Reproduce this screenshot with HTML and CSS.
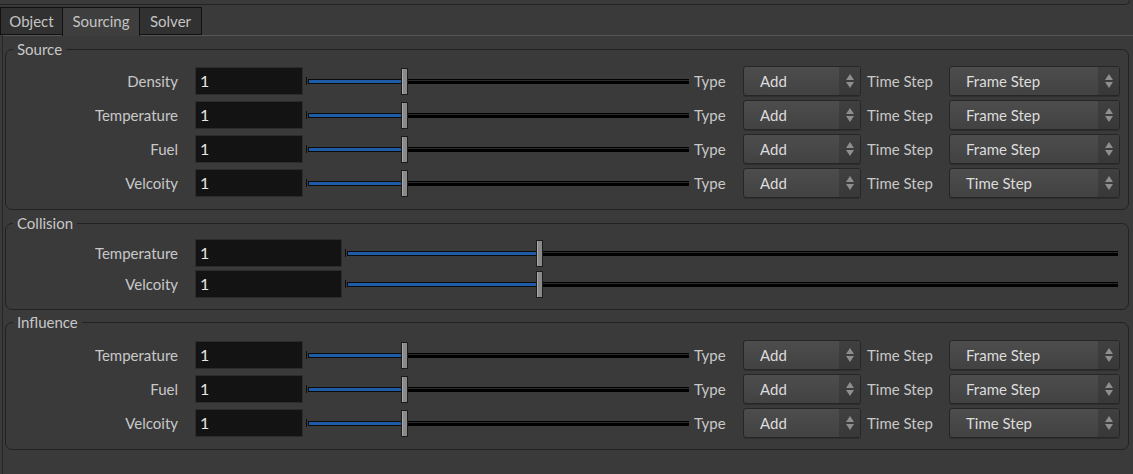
FILE: index.html
```html
<!DOCTYPE html>
<html lang="en">
<head>
    <meta charset="UTF-8">
    <meta name="viewport" content="width=device-width, initial-scale=1.0">
    <title>Sourcing</title>
    <link rel="stylesheet" href="styles.css">
</head>
<body>
    <div class="top-frame"></div>

    <div class="tabs">
        <div class="tab">Object</div>
        <div class="tab active">Sourcing</div>
        <div class="tab">Solver</div>
    </div>

    <div class="pane">
        <fieldset class="group">
            <legend>Source</legend>
            <div class="rows">
                <div class="row">
                    <span class="label">Density</span>
                    <div class="field">1</div>
                    <div class="slider"><span class="cap"></span><span class="fill" style="width: 93px"></span><span class="handle"></span><span class="track"></span></div>
                    <span class="label-sm">Type</span>
                    <div class="menu type-menu"><span class="menu-text">Add</span><span class="arrows"></span></div>
                    <span class="label-sm step-label">Time Step</span>
                    <div class="menu step-menu"><span class="menu-text">Frame Step</span><span class="arrows"></span></div>
                </div>
                <div class="row">
                    <span class="label">Temperature</span>
                    <div class="field">1</div>
                    <div class="slider"><span class="cap"></span><span class="fill" style="width: 93px"></span><span class="handle"></span><span class="track"></span></div>
                    <span class="label-sm">Type</span>
                    <div class="menu type-menu"><span class="menu-text">Add</span><span class="arrows"></span></div>
                    <span class="label-sm step-label">Time Step</span>
                    <div class="menu step-menu"><span class="menu-text">Frame Step</span><span class="arrows"></span></div>
                </div>
                <div class="row">
                    <span class="label">Fuel</span>
                    <div class="field">1</div>
                    <div class="slider"><span class="cap"></span><span class="fill" style="width: 93px"></span><span class="handle"></span><span class="track"></span></div>
                    <span class="label-sm">Type</span>
                    <div class="menu type-menu"><span class="menu-text">Add</span><span class="arrows"></span></div>
                    <span class="label-sm step-label">Time Step</span>
                    <div class="menu step-menu"><span class="menu-text">Frame Step</span><span class="arrows"></span></div>
                </div>
                <div class="row">
                    <span class="label">Velcoity</span>
                    <div class="field">1</div>
                    <div class="slider"><span class="cap"></span><span class="fill" style="width: 93px"></span><span class="handle"></span><span class="track"></span></div>
                    <span class="label-sm">Type</span>
                    <div class="menu type-menu"><span class="menu-text">Add</span><span class="arrows"></span></div>
                    <span class="label-sm step-label">Time Step</span>
                    <div class="menu step-menu"><span class="menu-text">Time Step</span><span class="arrows"></span></div>
                </div>
            </div>
        </fieldset>

        <fieldset class="group group-collision">
            <legend>Collision</legend>
            <div class="rows rows-tight">
                <div class="row row-short">
                    <span class="label">Temperature</span>
                    <div class="field field-wide">1</div>
                    <div class="slider slider-wide"><span class="cap"></span><span class="fill" style="width: 189px"></span><span class="handle"></span><span class="track"></span></div>
                </div>
                <div class="row row-short">
                    <span class="label">Velcoity</span>
                    <div class="field field-wide">1</div>
                    <div class="slider slider-wide"><span class="cap"></span><span class="fill" style="width: 189px"></span><span class="handle"></span><span class="track"></span></div>
                </div>
            </div>
        </fieldset>

        <fieldset class="group group-influence">
            <legend>Influence</legend>
            <div class="rows">
                <div class="row">
                    <span class="label">Temperature</span>
                    <div class="field">1</div>
                    <div class="slider"><span class="cap"></span><span class="fill" style="width: 93px"></span><span class="handle"></span><span class="track"></span></div>
                    <span class="label-sm">Type</span>
                    <div class="menu type-menu"><span class="menu-text">Add</span><span class="arrows"></span></div>
                    <span class="label-sm step-label">Time Step</span>
                    <div class="menu step-menu"><span class="menu-text">Frame Step</span><span class="arrows"></span></div>
                </div>
                <div class="row">
                    <span class="label">Fuel</span>
                    <div class="field">1</div>
                    <div class="slider"><span class="cap"></span><span class="fill" style="width: 93px"></span><span class="handle"></span><span class="track"></span></div>
                    <span class="label-sm">Type</span>
                    <div class="menu type-menu"><span class="menu-text">Add</span><span class="arrows"></span></div>
                    <span class="label-sm step-label">Time Step</span>
                    <div class="menu step-menu"><span class="menu-text">Frame Step</span><span class="arrows"></span></div>
                </div>
                <div class="row">
                    <span class="label">Velcoity</span>
                    <div class="field">1</div>
                    <div class="slider"><span class="cap"></span><span class="fill" style="width: 93px"></span><span class="handle"></span><span class="track"></span></div>
                    <span class="label-sm">Type</span>
                    <div class="menu type-menu"><span class="menu-text">Add</span><span class="arrows"></span></div>
                    <span class="label-sm step-label">Time Step</span>
                    <div class="menu step-menu"><span class="menu-text">Time Step</span><span class="arrows"></span></div>
                </div>
            </div>
        </fieldset>
    </div>
</body>
</html>
```

FILE: styles.css
```css
body {
    margin: 0;
    width: 1133px;
    height: 474px;
    overflow: hidden;
    background-color: #3a3a3a;
    font-family: Lato, "Noto Sans", sans-serif;
    font-size: 15px;
    color: #c8c8c8;
}

.top-frame {
    width: 1129px;
    height: 4px;
    border-bottom: 1px solid #232323;
    border-right: 1px solid #232323;
    border-bottom-right-radius: 5px;
}

/* Tabs */
.tabs {
    display: flex;
    margin-top: 2px;
    height: 28px;
    position: relative;
    z-index: 1;
}

.tab {
    box-sizing: border-box;
    width: 63px;
    height: 28px;
    line-height: 26px;
    text-align: center;
    background: #313131;
    border: 1px solid #111;
    color: #c4c4c4;
}

.tab.active {
    width: 78px;
    height: 29px;
    margin-left: -1px;
    margin-right: -1px;
    background: #3e3e3e;
    border-bottom: none;
}

/* Pane */
.pane {
    margin-left: 2px;
    height: 440px;
    border-top: 1px solid #555;
    border-left: 1px solid #262626;
    background: #3a3a3a;
    padding-top: 4px;
}

.group {
    margin: 0 4px 4px 2px;
    padding: 0 0 11px 0;
    border: 1px solid #222;
    border-radius: 7px;
    min-width: 0;
}

.group-collision {
    margin-bottom: 3px;
    padding-bottom: 11px;
}

.group legend {
    margin-left: 7px;
    padding: 0 4px;
    line-height: 18px;
    color: #c8c8c8;
}

.rows {
    display: flex;
    flex-direction: column;
    gap: 4px;
    padding-top: 8px;
}

.group-influence .rows {
    padding-top: 9px;
}

.rows-tight {
    gap: 3px;
    padding-top: 7px;
}

.row {
    display: flex;
    align-items: center;
    height: 30px;
}

.row-short {
    height: 28px;
}

.label {
    width: 172px;
    margin-right: 17px;
    text-align: right;
}

.field {
    box-sizing: border-box;
    width: 108px;
    height: 28px;
    padding-left: 4px;
    background: #131313;
    border: 1px solid #2c2c2c;
    color: #e8e8e8;
    font-size: 16px;
    line-height: 26px;
}

.field-wide {
    width: 147px;
}

/* Slider */
.slider {
    display: flex;
    align-items: center;
    width: 383px;
    margin-left: 3px;
    height: 28px;
}

.slider-wide {
    width: 773px;
}

.slider .cap {
    width: 1px;
    height: 8px;
    margin-right: 1px;
    background: #0c0c0c;
}

.slider .fill {
    box-sizing: border-box;
    height: 5px;
    background: #1f5ca8;
    border-top: 1px solid #0b0b0b;
    border-bottom: 1px solid #0b0b0b;
    border-left: 1px solid #0b0b0b;
}

.slider .handle {
    box-sizing: border-box;
    width: 7px;
    height: 27px;
    background: linear-gradient(to right, #a8a8a8 0 1px, #8a8a8a 1px 5px, #5a5a5a 5px);
    border: 1px solid #1c1c1c;
}

.slider .track {
    flex: 1;
    height: 5px;
    background: linear-gradient(#000 0 1px, #2a2a2a 1px 2px, #000 2px);
}

/* Menus */
.label-sm {
    width: 49px;
    margin-left: 5px;
}

.step-label {
    width: 82px;
    margin-left: 6px;
}

.menu {
    box-sizing: border-box;
    display: flex;
    height: 30px;
    background: linear-gradient(#4d4d4d, #424242);
    border: 1px solid #262626;
    border-radius: 3px;
    box-shadow: 0 1px 0 #2e2e2e;
    color: #dcdcdc;
}

.type-menu {
    width: 118px;
}

.step-menu {
    width: 171px;
}

.menu-text {
    flex: 1;
    padding-left: 16px;
    line-height: 28px;
}

.arrows {
    position: relative;
    width: 21px;
    background: linear-gradient(#404040, #383838);
    border-radius: 0 2px 2px 0;
}

.arrows::before,
.arrows::after {
    content: "";
    position: absolute;
    left: 7px;
    border-left: 4px solid transparent;
    border-right: 4px solid transparent;
}

.arrows::before {
    top: 7px;
    border-bottom: 6px solid #8e8e8e;
}

.arrows::after {
    top: 15px;
    border-top: 6px solid #8e8e8e;
}
```
